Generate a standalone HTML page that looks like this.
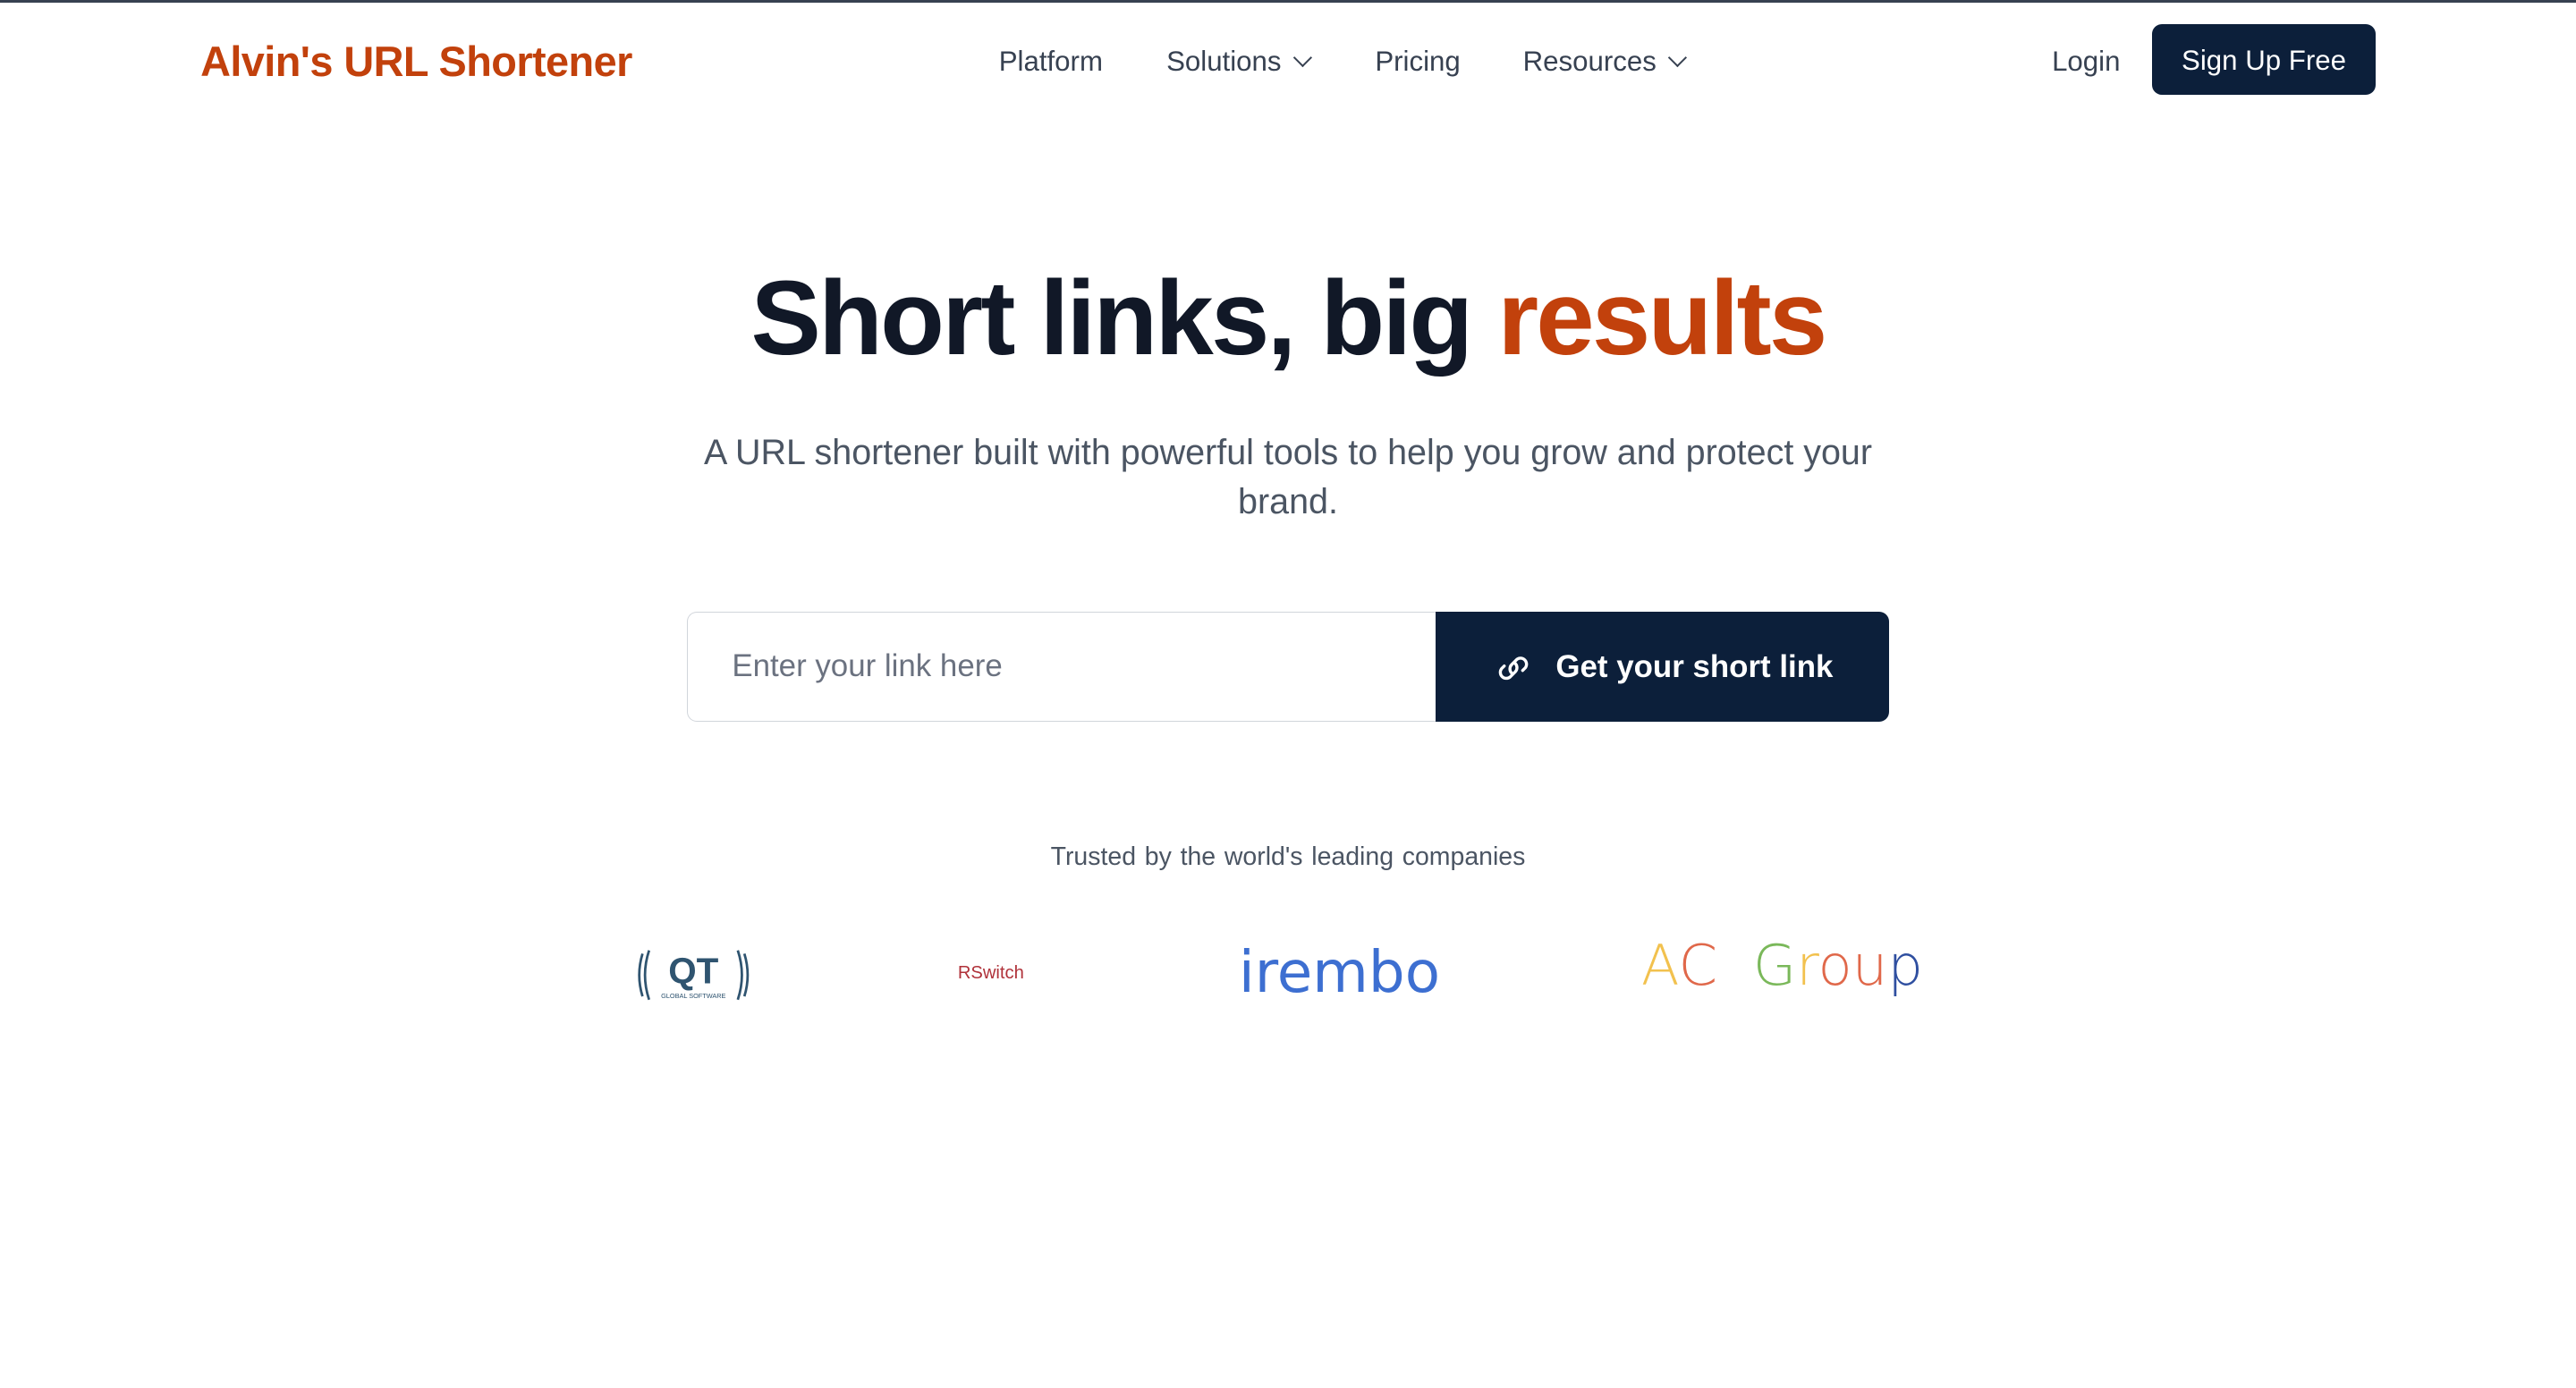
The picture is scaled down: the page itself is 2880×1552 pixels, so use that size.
<!DOCTYPE html>
<html><head><meta charset="utf-8"><style>
html,body{margin:0;padding:0;background:#fff;overflow:hidden}
body{width:2880px;height:1552px}
#w{zoom:1.83673;width:1568px;height:845px;position:relative;font-family:"Liberation Sans",sans-serif;border-top:2px solid #374151;box-sizing:border-box}
.a{position:absolute;white-space:nowrap}
.nav{font-size:17px;color:#374151;top:26px}
.chev{display:inline-block;width:7px;height:7px;border-right:1.6px solid #374151;border-bottom:1.6px solid #374151;transform:rotate(45deg);margin-left:9px;position:relative;top:-4px}
</style></head><body><div id="w">
<div class="a" style="left:122px;top:21px;font-size:25.5px;font-weight:bold;color:#c2410c;letter-spacing:-0.3px">Alvin's URL Shortener</div>
<div class="a nav" style="left:608px">Platform</div>
<div class="a nav" style="left:710px">Solutions<span class="chev"></span></div>
<div class="a nav" style="left:837px">Pricing</div>
<div class="a nav" style="left:927px">Resources<span class="chev"></span></div>
<div class="a nav" style="left:1249px">Login</div>
<div class="a" style="left:1310px;top:13px;width:136px;height:43px;background:#0c1f3a;border-radius:6px;color:#fff;font-size:17px;line-height:45px;text-align:center">Sign Up Free</div>
<div class="a" style="left:0;width:1568px;text-align:center;top:155px;font-size:64px;font-weight:bold;color:#111827;letter-spacing:-1.5px">Short links, big <span style="color:#c2410c">results</span></div>
<div class="a" style="left:0;width:1568px;text-align:center;top:259px;font-size:21.5px;line-height:30px;color:#4b5563">A URL shortener built with powerful tools to help you grow and protect your<br>brand.</div>
<div class="a" style="left:418px;top:371px;width:456px;border:1px solid #d1d5db;border-right:none;border-radius:6px 0 0 6px;font-size:19px;color:#6b7280;line-height:65px;padding-left:27px;box-sizing:border-box;height:67px">Enter your link here</div>
<div class="a" style="left:874px;top:371px;width:276px;height:67px;background:#0c1f3a;border-radius:0 6px 6px 0;color:#fff;font-size:19px;font-weight:bold;line-height:67px">
<svg style="position:absolute;left:35px;top:23px" width="24" height="22" viewBox="0 0 24 24" fill="none" stroke="#fff" stroke-width="2" stroke-linecap="round"><path d="M13.2 8.8a4 4 0 0 1 0 5.6l-3.5 3.5a4 4 0 0 1-5.6-5.6l1.8-1.8"/><path d="M10.8 15.2a4 4 0 0 1 0-5.6l3.5-3.5a4 4 0 0 1 5.6 5.6l-1.8 1.8"/></svg>
<span style="position:absolute;left:73px">Get your short link</span></div>
<div class="a" style="left:0;width:1568px;text-align:center;top:511px;font-size:15.5px;color:#4b5563;word-spacing:1px">Trusted by the world's leading companies</div>
<div class="a" style="left:387px;top:575px;width:70px;height:34px">
<svg width="70" height="34" viewBox="0 0 70 34"><path d="M4 4 Q0 17 4 30 M8 2 Q3 17 8 32 M66 4 Q70 17 66 30 M62 2 Q67 17 62 32" stroke="#2f5470" stroke-width="1.5" fill="none"/><text x="35" y="22" text-anchor="middle" font-family="Liberation Sans" font-weight="bold" font-size="22" fill="#2f5470">QT</text><text x="35" y="31" text-anchor="middle" font-family="Liberation Sans" font-size="4" fill="#2f5470">GLOBAL SOFTWARE</text></svg></div>
<div class="a" style="left:583px;top:585px;font-size:11px;color:#b0323a">RSwitch</div>
<div class="a" style="left:754px;top:570px;font-size:35px;color:#3d6fd1;font-family:'DejaVu Sans',sans-serif">irembo</div>
<div class="a" style="left:999px;top:566px;font-size:34px;font-family:'DejaVu Sans',sans-serif;font-weight:300"><span style="color:#f2c14e">A</span><span style="color:#e0684a">C</span> &nbsp;<span style="color:#7ab85a">G</span><span style="color:#f2c14e">r</span><span style="color:#e0684a">o</span><span style="color:#e0684a">u</span><span style="color:#2f4fa0">p</span></div>
</div></body></html>
